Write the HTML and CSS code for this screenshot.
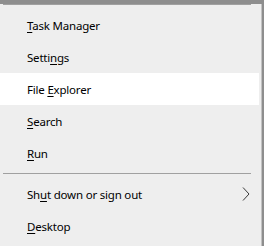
FILE: index.html
```html
<!DOCTYPE html>
<html lang="en">
<head>
<meta charset="UTF-8">
<title>Quick Link Menu</title>
<link rel="stylesheet" href="styles.css">
</head>
<body>

<div class="menu">
    <div class="separator"></div>

    <div class="item"><span class="label"><u>T</u>ask Manager</span></div>
    <div class="item"><span class="label">Setti<u>n</u>gs</span></div>
    <div class="item hover"><span class="label">File <u>E</u>xplorer</span></div>
    <div class="item"><span class="label"><u>S</u>earch</span></div>
    <div class="item"><span class="label"><u>R</u>un</span></div>

    <div class="separator"></div>

    <div class="item">
        <span class="label">Sh<u>u</u>t down or sign out</span>
        <svg class="chevron" width="8" height="14" viewBox="0 0 8 14">
            <path d="M1 0.5 L7 7 L1 13.5" fill="none" stroke="#3a3a3a" stroke-width="1"/>
        </svg>
    </div>
    <div class="item"><span class="label"><u>D</u>esktop</span></div>
</div>

</body>
</html>
```

FILE: styles.css
```css
body, html {
    margin: 0;
    background-color: #8e8e8e;
    font-family: 'Noto Sans', 'Open Sans', sans-serif;
}

.menu {
    width: 261px;
    height: 246px;
    background-color: #eeeeee;
    border-right: 1px solid #c2c2c2;
}

.separator {
    height: 1px;
    background-color: #a0a0a0;
    margin: 4px 10px 4px 3px;
}

.item {
    height: 32px;
    margin-right: 2px;
    padding-left: 27px;
    padding-right: 9px;
    display: flex;
    align-items: center;
    justify-content: space-between;
    font-size: 11.5px;
    letter-spacing: -0.2px;
    color: #000000;
}

.item.hover {
    background-color: #ffffff;
}

.item u {
    text-decoration-thickness: 1px;
    text-underline-offset: 2px;
}

.chevron {
    display: block;
}
```
